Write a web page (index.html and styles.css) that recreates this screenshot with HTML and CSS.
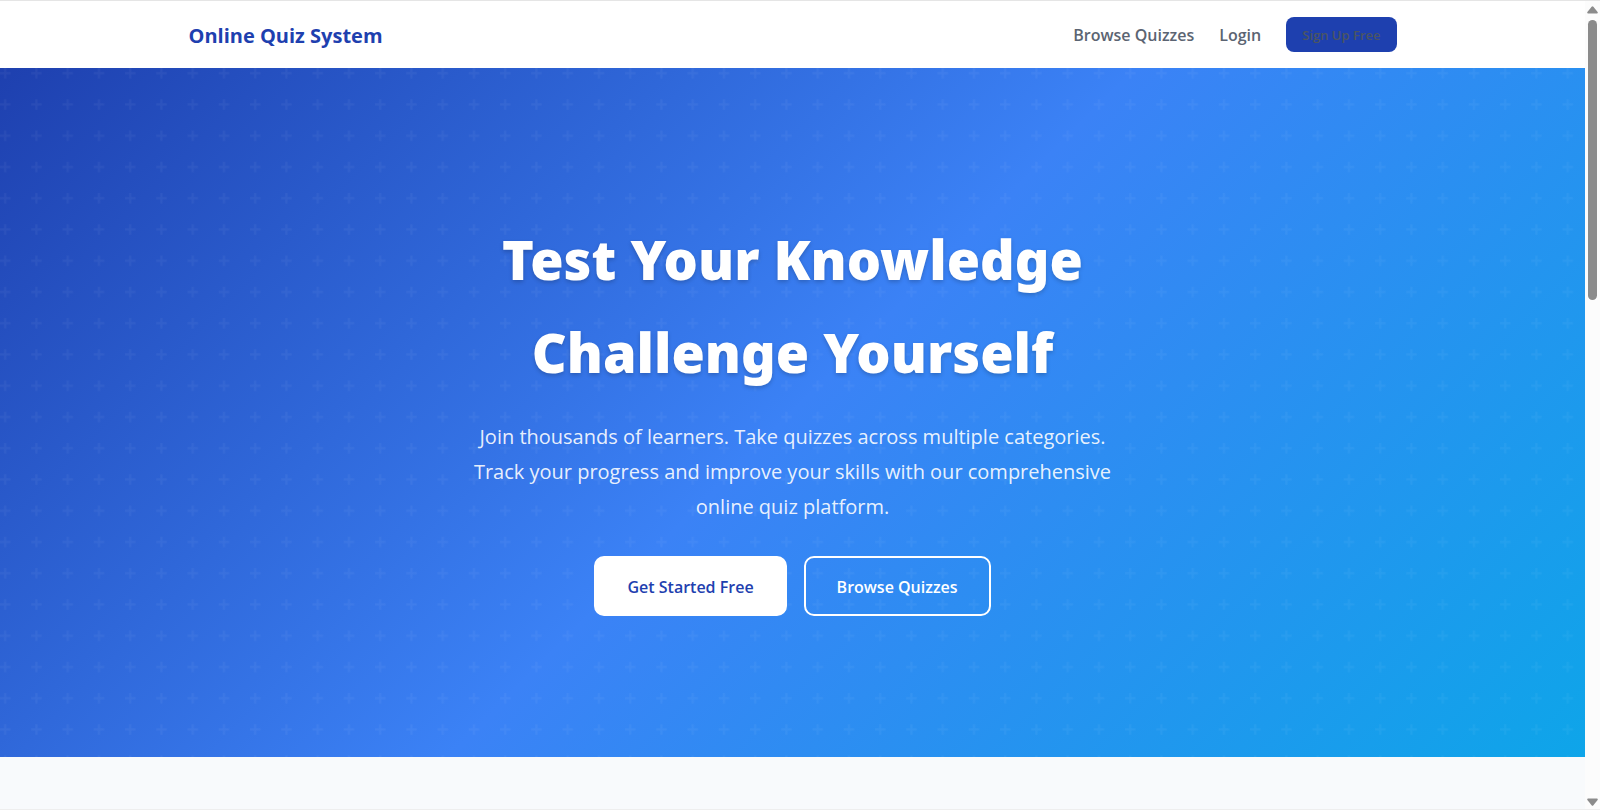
FILE: index.html
```html
<!DOCTYPE html>
<html lang="en">
<head>
    <meta charset="UTF-8">
    <meta name="viewport" content="width=device-width, initial-scale=1.0">
    <title>Online Quiz System</title>
    <link rel="stylesheet" href="styles.css">
</head>
<body>
    <div class="page">
        <header class="header">
            <div class="container nav">
                <a href="#" class="logo">Online Quiz System</a>
                <nav class="nav-links">
                    <a href="#">Browse Quizzes</a>
                    <a href="#">Login</a>
                    <a href="#" class="btn-signup">Sign Up Free</a>
                </nav>
            </div>
        </header>

        <section class="hero">
            <div class="hero-content">
                <h1>Test Your Knowledge<br>Challenge Yourself</h1>
                <p>Join thousands of learners. Take quizzes across multiple categories. Track your progress and improve your skills with our comprehensive online quiz platform.</p>
                <div class="hero-buttons">
                    <a href="#" class="btn btn-primary">Get Started Free</a>
                    <a href="#" class="btn btn-outline">Browse Quizzes</a>
                </div>
            </div>
        </section>

        <section class="features"></section>
    </div>

    <div class="scrollbar" aria-hidden="true">
        <svg width="11" height="8" viewBox="0 0 11 8"><path d="M4.6.7q.9-1.1 1.8 0L10.6 6q.7 1.5-.8 1.5H1.2Q-.3 7.5.4 6z" fill="#8b8b8b"/></svg>
        <div class="thumb"></div>
        <svg width="11" height="8" viewBox="0 0 11 8"><path d="M4.6 7.3q.9 1.1 1.8 0L10.6 2q.7-1.5-.8-1.5H1.2Q-.3.5.4 2z" fill="#8b8b8b"/></svg>
    </div>
</body>
</html>
```
FILE: styles.css
```css
* {
    margin: 0;
    padding: 0;
    box-sizing: border-box;
}

body {
    display: flex;
    height: 100vh;
    overflow: hidden;
    font-family: "Segoe UI", "Open Sans", "Noto Sans", sans-serif;
    line-height: 1.6;
    background: #f8fafc;
    border-top: 1px solid #e5e5e5;
    border-bottom: 1px solid #eeeeee;
}

a {
    text-decoration: none;
}

.page {
    flex: 1;
    display: flex;
    flex-direction: column;
}

/* header */
.header {
    background: #fff;
}

.container {
    max-width: 1250px;
    margin: 0 auto;
    padding: 16px 21px;
}

.nav {
    display: flex;
    justify-content: space-between;
    align-items: center;
}

.logo {
    padding-top: 3px;
    font-size: 20px;
    font-weight: 700;
    color: #1e40af;
}

.nav-links {
    display: flex;
    align-items: center;
    gap: 25px;
}

.nav-links a {
    padding-top: 3px;
    font-size: 16px;
    font-weight: 600;
    color: #5b6472;
}

.nav-links .btn-signup {
    padding: 8px 16px 6px;
    font-size: 13px;
    color: #4b5563;
    background: #1e40af;
    border-radius: 8px;
}

/* hero */
.hero {
    display: flex;
    flex-shrink: 0;
    align-items: center;
    justify-content: center;
    min-height: 85vh;
    text-align: center;
    color: #fff;
    background-image:
        url("data:image/svg+xml,%3Csvg xmlns='http://www.w3.org/2000/svg' viewBox='0 0 120 120'%3E%3Cdefs%3E%3Cpattern id='p' width='30' height='30' patternUnits='userSpaceOnUse'%3E%3Cpath d='M6 4V0H4v4H0v2h4v4h2V6h4V4z' fill='%23fff' fill-opacity='.045'/%3E%3C/pattern%3E%3C/defs%3E%3Cpath d='M0 0h120v120H0z' fill='url(%23p)'/%3E%3C/svg%3E"),
        linear-gradient(135deg, #1e40af 0%, #3b82f6 50%, #0ea5e9 100%);
    background-size: 125px 125px, 100% 100%;
}

.hero-content {
    max-width: 648px;
    padding-top: 4px;
}

.hero h1 {
    margin-bottom: 20px;
    font-family: "Segoe UI", "Noto Sans", "Open Sans", sans-serif;
    font-size: 54px;
    font-weight: 900;
    line-height: 93px;
    text-shadow: 0 2px 4px rgba(0, 0, 0, 0.2);
}

.hero p {
    margin-bottom: 32px;
    font-size: 20px;
    line-height: 35px;
    color: rgba(255, 255, 255, 0.9);
}

.hero-buttons {
    display: flex;
    justify-content: center;
    gap: 17px;
}

.btn {
    padding: 16px 31px 14px;
    font-size: 16px;
    font-weight: 600;
    line-height: 26px;
    border: 2px solid #fff;
    border-radius: 10px;
}

.btn-primary {
    color: #1e40af;
    background: #fff;
}

.btn-outline {
    color: #fff;
}

.features {
    flex: 1;
    background: #f8fafc;
}

/* scrollbar */
.scrollbar {
    display: flex;
    flex-direction: column;
    align-items: center;
    width: 15px;
    padding: 5px 0 3px;
    background: #fcfcfc;
}

.thumb {
    width: 9px;
    height: 35%;
    margin: 6px 0 auto;
    background: #8b8b8b;
    border-radius: 5px;
}
```
